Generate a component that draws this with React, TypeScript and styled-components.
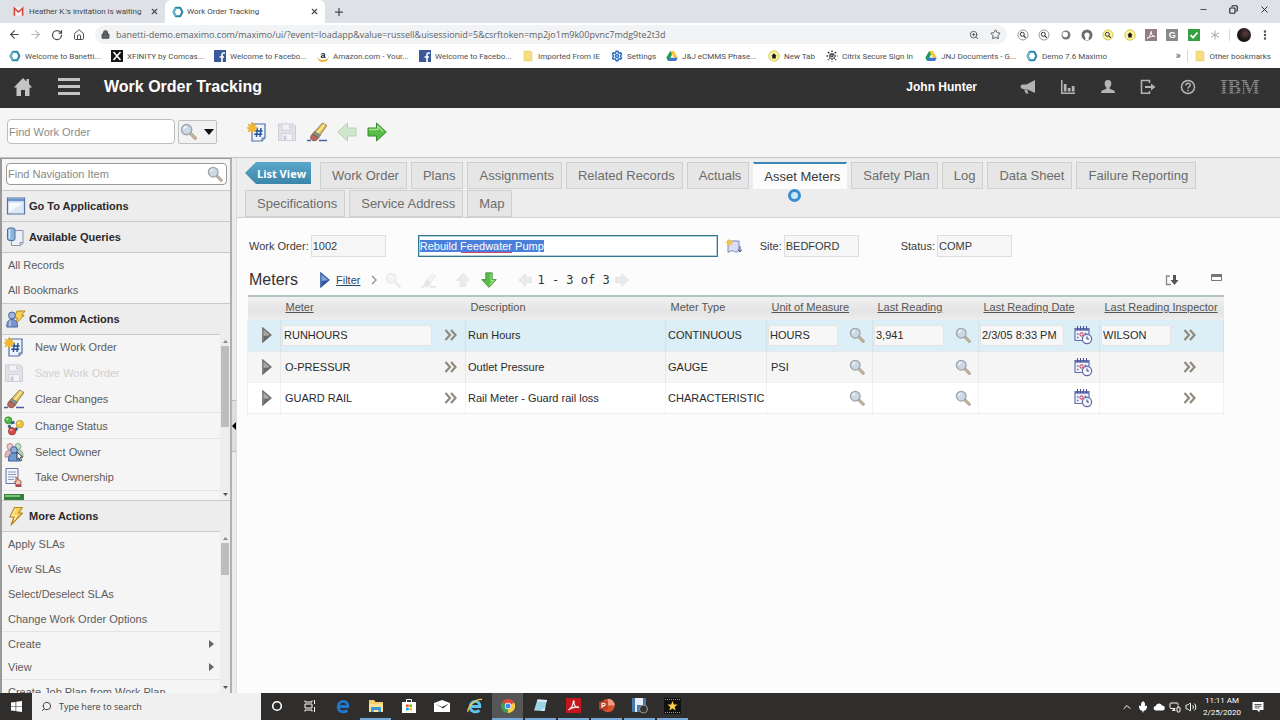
import React, { useEffect, useRef } from 'react';
import styled, { createGlobalStyle, css } from 'styled-components';
import {
  ArrowLeft, ArrowRight, RotateCw, House, Lock, ZoomIn, Star, X, Plus, Minus,
  EllipsisVertical, Search, Mic, Volume2, ChevronUp, MonitorSmartphone, Copy, Settings,
} from 'lucide-react';

const uiFont = '"Open Sans", "Noto Sans", sans-serif';
const smallFont = 'Roboto, "Open Sans", sans-serif';
const appFont = '"Liberation Sans", Arial, sans-serif';

const GlobalStyle = createGlobalStyle`
  *, *::before, *::after { box-sizing: border-box; }
  body { margin: 0; font-family: ${appFont}; font-size: 11px; color: #3a3a3a; background: #fcfcfc; }
  button, input { font: inherit; color: inherit; margin: 0; }
  button { border: 0; padding: 0; background: none; cursor: pointer; }
  a { color: inherit; }
  svg { display: block; flex: none; }
`;

const Page = styled.div`
  display: flex;
  flex-direction: column;
  height: 100vh;
  overflow: hidden;
`;

/* ---------- Browser chrome ---------- */

const TabStrip = styled.div`
  display: flex;
  flex: none;
  height: 23px;
  background: #dee1e6;
  font-family: ${smallFont};
  font-size: 8px;
  color: #45484c;
`;

const BrowserTab = styled.div<{ $active?: boolean }>`
  display: flex;
  align-items: center;
  gap: ${p => (p.$active ? 3 : 5)}px;
  width: ${p => (p.$active ? 160 : 165)}px;
  padding: 0 6px 0 ${p => (p.$active ? 7 : 13)}px;
  background: ${p => (p.$active ? '#fff' : 'transparent')};
  border-radius: 6px 6px 0 0;
`;

const TabTitle = styled.span`
  flex: 1;
  white-space: nowrap;
`;

const IconButton = styled.button<{ $w?: number }>`
  display: flex;
  flex: none;
  align-items: center;
  justify-content: center;
  width: ${p => (p.$w ? `${p.$w}px` : 'auto')};
`;

const WindowButtons = styled.div`
  display: flex;
  align-items: center;
  gap: 21px;
  height: 19px;
  margin-left: auto;
  padding-right: 10px;
  color: #222;
`;

const AddressRow = styled.div`
  display: flex;
  flex: none;
  align-items: center;
  height: 23px;
  padding: 0 9px 0 4px;
  background: #fff;
  color: #4a4d51;
`;

const NavButtons = styled.div`
  display: flex;
  width: 91px;
`;

const Omnibox = styled.label`
  display: flex;
  flex: 1;
  align-items: center;
  height: 19px;
  gap: 6px;
  padding: 0 4px 0 6px;
  border-radius: 10px;
  background: #f1f3f4;
`;

const AddressInput = styled.input`
  flex: 1;
  min-width: 0;
  border: 0;
  padding: 0;
  outline: 0;
  background: none;
  font-family: ${uiFont};
  font-size: 9px;
  color: #606367;
`;

const Extensions = styled.div`
  display: flex;
  justify-content: space-between;
  width: 208px;
  margin: 0 6px 0 8px;
`;

const ThinRule = styled.span`
  width: 1px;
  height: 12px;
  background: #d5d7da;
`;

const Avatar = styled.span`
  width: 14px;
  height: 14px;
  margin: 0 8px 0 7px;
  border-radius: 50%;
  background: radial-gradient(circle at 60% 40%, #5b4038, #151515 60%);
`;

const Bookmarks = styled.nav`
  display: flex;
  flex: none;
  align-items: center;
  height: 22px;
  padding: 0 9px 2px;
  background: #fff;
  font-family: ${smallFont};
  font-size: 8px;
  color: #4c4f53;
`;

const Bookmark = styled.a<{ $w?: number }>`
  display: flex;
  flex: none;
  align-items: center;
  gap: 4px;
  width: ${p => (p.$w ? `${p.$w}px` : 'auto')};
  white-space: nowrap;
  text-decoration: none;
`;

const BookmarkEnd = styled.div`
  display: flex;
  align-items: center;
  gap: 6px;
  margin-left: auto;
`;

const More = styled.button`
  font-size: 11px;
  line-height: 12px;
`;

/* ---------- Application header and toolbar ---------- */

const AppHeader = styled.header`
  display: flex;
  flex: none;
  align-items: center;
  height: 40px;
  padding: 0 20px 3px 12px;
  background: #323232;
  color: #fff;
`;

const AppTitle = styled.h1`
  flex: 1;
  margin: 0;
  font-size: 16px;
  font-weight: bold;
`;

const UserName = styled.span`
  margin-right: 31px;
  font-size: 12px;
  font-weight: bold;
`;

const Brand = styled.span`
  display: flex;
  align-items: flex-end;
  margin-left: 12px;
  font-family: "Liberation Serif", serif;
  font-size: 20px;
  line-height: 22px;
  font-weight: bold;
  color: transparent;
  background: repeating-linear-gradient(#8c8c8c 0 1px, #555 1px 2px);
  background-clip: text;
  -webkit-background-clip: text;
`;

const Toolbar = styled.div`
  display: flex;
  flex: none;
  align-items: center;
  height: 50px;
  padding: 0 7px 2px;
  background: #f5f5f5;
  border-bottom: 1px solid #c4c4c4;
`;

const FindInput = styled.input`
  width: 168px;
  height: 25px;
  padding: 0 1px;
  border: 1px solid #bdbdbd;
  border-radius: 4px;
  background: #fff;
  &::placeholder { color: #8c8c8c; }
`;

const FindButton = styled.button`
  display: flex;
  align-items: center;
  justify-content: space-between;
  width: 39px;
  height: 24px;
  margin: 0 25px 0 3px;
  padding: 0 2px 0 1px;
  border: 1px solid #c0c0c0;
  border-radius: 2px;
  background: #f2f2f2;
`;

/* ---------- Navigation sidebar ---------- */

const Body = styled.div`
  display: flex;
  flex: 1;
  min-height: 0;
`;

const Sidebar = styled.aside`
  display: flex;
  flex: none;
  flex-direction: column;
  width: 232px;
  border: solid #999;
  border-width: 1px 2px 0 2px;
  border-right-color: #b0b0b0;
  background: #f5f5f5;
  color: #5c5c5c;
`;

const NavSearch = styled.label`
  display: flex;
  flex: none;
  align-items: center;
  height: 22px;
  margin: 4px 3px 5px 4px;
  padding: 0 3px 0 1px;
  border: 1px solid #999;
  border-radius: 4px;
  background: #fff;
`;

const NavSearchInput = styled.input`
  flex: 1;
  min-width: 0;
  padding: 0;
  border: 0;
  outline: 0;
  background: none;
  &::placeholder { color: #888; }
`;

const SectionHead = styled.h2`
  display: flex;
  flex: none;
  align-items: center;
  gap: 3px;
  height: 32px;
  margin: 0;
  padding-left: 4px;
  border: solid #c9c9c9;
  border-width: 1px 0;
  margin-bottom: -1px;
  background: #ededed;
  font-size: 11px;
  font-weight: bold;
  color: #2a2a2a;
`;

const ScrollArea = styled.div<{ $h?: number }>`
  display: flex;
  flex: ${p => (p.$h ? 'none' : '1')};
  height: ${p => (p.$h ? `${p.$h}px` : 'auto')};
  min-height: 0;
`;

const NavList = styled.ul`
  flex: 1;
  margin: 0;
  padding: 0;
  list-style: none;
  overflow: hidden;
`;

const NavRow = styled.li<{ $h: number; $rule?: boolean }>`
  height: ${p => p.$h}px;
  border-top: ${p => (p.$rule ? '1px solid #e4e4e4' : '0')};
`;

const NavButton = styled.button<{ $icon?: boolean }>`
  display: flex;
  align-items: center;
  gap: ${p => (p.$icon ? 11 : 0)}px;
  width: 100%;
  height: 100%;
  padding: 0 6px 0 ${p => (p.$icon ? 2 : 6)}px;
  text-align: left;
  white-space: nowrap;
  &:disabled { color: #d0d0d0; }
`;

const NavLabel = styled.span`
  flex: 1;
`;

const ScrollTrack = styled.div`
  display: flex;
  flex-direction: column;
  align-items: center;
  width: 10px;
  padding: 6px 0 4px;
  background: #eee;
`;

const ScrollThumb = styled.div<{ $h: number }>`
  width: 8px;
  height: ${p => p.$h}px;
  margin: 3px 0 auto;
  background: #bdbdbd;
`;

const Splitter = styled.div`
  display: flex;
  flex: none;
  align-items: center;
  width: 5px;
  background: #ececec;
  border-right: 1px solid #ddd;
`;

const SplitHandle = styled.button`
  display: flex;
  align-items: center;
  width: 5px;
  height: 52px;
  border: solid #bbb;
  border-width: 1px 0;
  background: #dedede;
`;

/* ---------- Record area ---------- */

const Main = styled.main`
  flex: 1;
  min-width: 0;
  background: #fcfcfc;
`;

const RecordTabs = styled.div`
  display: flex;
  flex-wrap: wrap;
  gap: 1px 4px;
  padding: 4px 8px 0;
  border-bottom: 1px solid #d2d2d2;
  background: #ededed;
`;

const ListView = styled.button`
  display: flex;
  align-items: center;
  justify-content: center;
  width: 66px;
  height: 22px;
  margin-right: 5px;
  padding-left: 7px;
  background: linear-gradient(#5ba8cc, #3b84aa);
  clip-path: polygon(0 50%, 11px 0, 100% 0, 100% 100%, 11px 100%);
  font-family: ${uiFont};
  font-size: 11px;
  font-weight: bold;
  color: #fff;
`;

const Tab = styled.button<{ $active?: boolean }>`
  position: relative;
  height: 27px;
  padding: 0 7px 0 11px;
  border: 1px solid #cfcfcf;
  background: #e6e6e6;
  font-size: 13px;
  color: #6c6c6c;
  ${p => p.$active && css`
    padding: 0 6px 0 10px;
    border-color: #fcfcfc;
    border-top: 2px solid #3a86b4;
    background: #fcfcfc;
    color: #3a3a3a;
  `}
`;

const BusyRing = styled.span`
  position: absolute;
  top: 25px;
  left: 34px;
  width: 13px;
  height: 13px;
  border: 3px solid #3b8bd0;
  border-radius: 50%;
  background: #c9e9fb;
`;

const RecordFields = styled.div`
  display: flex;
  align-items: center;
  padding: 17px 12px 0;
`;

const Field = styled.label<{ $gap: number }>`
  display: flex;
  align-items: center;
  gap: 2px;
  margin-right: ${p => p.$gap}px;
  white-space: nowrap;
`;

const ReadonlyInput = styled.input<{ $w: number }>`
  width: ${p => p.$w}px;
  height: 22px;
  padding: 0 1px;
  border: 1px solid #dedede;
  background: #f6f6f6;
  outline: 0;
`;

const DescriptionBox = styled.div`
  position: relative;
  margin-right: 8px;
`;

const DescriptionInput = styled.input`
  display: block;
  width: 300px;
  height: 22px;
  padding: 0 1px;
  border: 1px solid #2f788f;
  box-shadow: inset 0 0 0 1px #b5d0d8;
  outline: 0;
  background: #fff;
  &::selection { background: #4a7fdb; color: #fff; }
`;

const SpellMark = styled.span`
  position: absolute;
  left: 43px;
  bottom: 4px;
  width: 51px;
  border-bottom: 1px solid #d04468;
`;

const Section = styled.section`
  padding: 9px 56px 0 10px;
`;

const SectionBar = styled.div`
  display: flex;
  align-items: center;
  height: 29px;
  padding: 0 1px 1px 2px;
`;

const SectionTitle = styled.h2`
  width: 71px;
  margin: 0;
  font-size: 16px;
  font-weight: normal;
  color: #333;
`;

const FilterLink = styled.a`
  margin: 0 11px 0 6px;
  color: #2c4a66;
`;

const BarGroup = styled.div<{ $gap: number; $ml?: number }>`
  display: flex;
  align-items: center;
  gap: ${p => p.$gap}px;
  margin-left: ${p => (p.$ml ? `${p.$ml}px` : 'auto')};
`;

const PageCount = styled.span`
  font-family: "DejaVu Sans Mono", monospace;
  font-size: 12px;
  color: #333;
`;

const MetersTable = styled.table`
  width: 100%;
  table-layout: fixed;
  border-collapse: collapse;
  border-top: 2px solid #b0c4c4;
`;

const Col = styled.col<{ $w?: number }>`
  width: ${p => (p.$w ? `${p.$w}px` : 'auto')};
`;

const HeadCell = styled.th`
  height: 24px;
  padding: 0 0 4px 5px;
  text-align: left;
  font-weight: normal;
  white-space: nowrap;
  color: #555;
`;

const HeadRow = styled.tr`
  background: linear-gradient(#f2f2f2, #e4e4e4 60%, #ededed);
`;

const Row = styled.tr<{ $tone: string }>`
  background: ${p => p.$tone};
`;

const Cell = styled.td<{ $tight?: boolean }>`
  height: 31px;
  padding: 0 0 0 ${p => (p.$tight ? 1 : 2)}px;
  border: 1px solid rgba(0, 0, 0, 0.05);
  border-top: 0;
  white-space: nowrap;
  color: #2a2a2a;
`;

const CellLine = styled.div`
  display: flex;
  align-items: center;
  gap: 11px;
`;

const CellInput = styled.input<{ $w: number }>`
  width: ${p => p.$w}px;
  height: 21px;
  padding: 0 1px;
  border: 1px solid #e4e4e4;
  background: #f7f7f7;
  outline: 0;
`;

const CellText = styled.span<{ $w: number }>`
  width: ${p => p.$w}px;
  padding-left: 3px;
`;

/* ---------- Taskbar ---------- */

const Taskbar = styled.footer`
  display: flex;
  flex: none;
  align-items: stretch;
  height: 27px;
  background: #302e2c;
  color: #fff;
  font-family: ${uiFont};
`;

const TaskSearch = styled.label`
  display: flex;
  align-items: center;
  gap: 7px;
  width: 229px;
  padding-left: 9px;
  background: #f0f0f0;
  color: #333;
`;

const TaskInput = styled.input`
  flex: 1;
  min-width: 0;
  padding: 0;
  border: 0;
  outline: 0;
  background: none;
  font-size: 9px;
  &::placeholder { color: #444; }
`;

const TaskButton = styled.button<{ $open?: boolean; $current?: boolean }>`
  display: flex;
  align-items: center;
  justify-content: center;
  width: 31px;
  margin-right: 2px;
  border-bottom: 2px solid ${p => (p.$open ? '#76a9d8' : 'transparent')};
  background: ${p => (p.$current ? '#565656' : 'transparent')};
`;

const Tray = styled.div`
  display: flex;
  align-items: center;
  gap: 4px;
  margin-left: auto;
  padding-right: 16px;
`;

const Clock = styled.time`
  margin: 0 7px 0 2px;
  font-family: ${smallFont};
  font-size: 8px;
  line-height: 12px;
  text-align: center;
`;

/* ---------- Icons ---------- */

const Glass = ({ size = 18, faded = false }: { size?: number; faded?: boolean }) => (
  <svg width={size} height={size} viewBox="0 0 18 18" opacity={faded ? 0.2 : 1}>
    <path d="M11 11l5 5" stroke="#a39682" strokeWidth="3.4" strokeLinecap="round" />
    <path d="M11 11l5 5" stroke="#c9b9a0" strokeWidth="1.6" strokeLinecap="round" />
    <circle cx="7" cy="7" r="5.4" fill="#cbd9e6" stroke="#a0a5ab" strokeWidth="1.5" />
    <path d="M4 6.5a3.2 3.2 0 0 1 3-2.6" stroke="#fff" strokeWidth="1.3" fill="none" />
  </svg>
);

const NewRecord = () => (
  <svg width="20" height="20" viewBox="0 0 20 20">
    <path d="M5 2h13v14l-3 3H5z" fill="#eef4fc" stroke="#4f6ea6" strokeWidth="1.2" />
    <path d="M15 19v-3h3" fill="#c0cfe8" stroke="#4f6ea6" strokeWidth="1" />
    <path d="M10.4 6l-1 9M14 6l-1 9M7.6 9h8M7.2 12.2h8" stroke="#234f96" strokeWidth="1.4" />
    <path d="M5 0l1.2 3.2L9 2 7.8 4.6 11 6 7.8 7 9 10 6.2 8.600 5 11.500 3.800 8.600 1 10 2.200 7 0 6l2.500-1.300L1 2l2.800 1.200z" fill="#f5b92e" stroke="#e09c1c" strokeWidth=".5" />
  </svg>
);

const Floppy = () => (
  <svg width="20" height="20" viewBox="0 0 20 20" opacity=".5">
    <path d="M1.500 2h15l2 2v14.500h-17z" fill="#cfd0e0" stroke="#a5a6bd" />
    <path d="M5 2h10v6H5z" fill="#f3f3f8" stroke="#a5a6bd" strokeWidth=".8" />
    <path d="M4.500 11.500h11v7h-11z" fill="#f3f3f8" stroke="#a5a6bd" strokeWidth=".8" />
    <path d="M6.500 13.500h3v5h-3z" fill="#a5a6bd" />
    <path d="M12 3h2v3.500h-2z" fill="#b5b6cb" />
  </svg>
);

const Eraser = ({ size = 20, faded = false }: { size?: number; faded?: boolean }) => (
  <svg width={size} height={size} viewBox="0 0 20 20" opacity={faded ? 0.2 : 1}>
    <path d="M0 18.500h4M12 18.500h8" stroke="#4f5f9e" strokeWidth="1.500" />
    <path d="M15.500 1L20 3.500 11.500 15 6 11.500z" fill={faded ? '#bbb' : '#e3c15c'} stroke={faded ? '#999' : '#7c6a34'} strokeWidth=".8" />
    <path d="M17.500 2.200L8.800 13.200" stroke="#fbe9a8" strokeWidth="1.500" />
    <path d="M7.500 9.500l6 3.800-2 2.600-6-3.700z" fill="#8b9484" stroke="#5e6459" strokeWidth=".6" />
    <path d="M5.500 12l6 3.900c-1.500 2.600-3.800 3.400-6 2.500s-2.800-3.800 0-6.400z" fill={faded ? '#999' : '#b9695c'} stroke={faded ? '#888' : '#7d453c'} strokeWidth=".7" />
  </svg>
);

const turns = { right: 0, down: 90, left: 180, up: 270 };
const BlockArrow = ({ dir, size = 20, tone = 'green' }: { dir: keyof typeof turns; size?: number; tone?: 'green' | 'pale' | 'grey' }) => {
  const fills = { green: ['#57bd45', '#3b8a35'], pale: ['#cfe6cf', '#b5d3b5'], grey: ['#ebebeb', '#e0e0e0'] }[tone];
  return (
    <svg width={size} height={size} viewBox="0 0 20 20">
      <g transform={`rotate(${turns[dir]} 10 10)`}>
        <path d="M1 6h8.500V1L19.300 10l-9.800 9v-5H1z" fill={fills[0]} stroke={fills[1]} />
        {tone === 'green' && <path d="M2 7.500h8.800V4.300L16 9.300" fill="none" stroke="#a5e196" strokeWidth="1.300" />}
      </g>
    </svg>
  );
};

const Triangle = ({ dir, w, h, color }: { dir: 'up' | 'down' | 'left' | 'right'; w: number; h: number; color: string }) => (
  <svg width={w} height={h} viewBox="0 0 10 10" preserveAspectRatio="none">
    <path fill={color} d={{ up: 'M0 10L5 0l5 10z', down: 'M0 0h10L5 10z', left: 'M10 0v10L0 5z', right: 'M0 0l10 5L0 10z' }[dir]} />
  </svg>
);

const RowArrow = ({ from = '#a8a8a8', to = '#6a6a6a' }: { from?: string; to?: string }) => (
  <svg width="10" height="16" viewBox="0 0 10 16">
    <path d="M.8 1L9 8 .8 15z" fill={from} stroke={to} strokeWidth="1.200" />
    <path d="M8.500 8.300L1.500 14V9z" fill={to} />
  </svg>
);

const Chevrons = () => (
  <svg width="16" height="14" viewBox="0 0 16 14" fill="none" stroke="#8f8a7c" strokeWidth="2.200">
    <path d="M2.500 2l4.500 5-4.500 5M8 2l4.500 5L8 12" />
  </svg>
);

const CalendarClock = () => (
  <svg width="20" height="20" viewBox="0 0 20 20">
    <path d="M2 3.500h14v12H2z" fill="#eef0fb" stroke="#6673b0" strokeWidth="1.200" />
    <path d="M2 4.500h14" stroke="#6673b0" strokeWidth="2.400" />
    <path d="M4.500 1v4M7.500 1v4M10.500 1v4M13.500 1v4" stroke="#444f94" strokeWidth="1" />
    <path d="M4 9h1.500M4 12.500h1.500M11.500 8.500h2" stroke="#6673b0" strokeWidth="1.600" />
    <circle cx="8.500" cy="9.500" r="1.600" fill="#fff" stroke="#d0506a" strokeWidth="1.100" />
    <circle cx="14" cy="14" r="4.600" fill="#f4f6fc" stroke="#62699c" strokeWidth="1.200" />
    <path d="M14 11.500V14h2" stroke="#333a70" fill="none" />
  </svg>
);

const LongDescription = () => (
  <svg width="17" height="17" viewBox="0 0 17 17">
    <path d="M3 3h11v9.500c-1.500 2-3 2-4.500 1s-4-1-6.500 1z" fill="#d9def4" stroke="#7f86b8" />
    <path d="M15 8v6M12.800 11.500L15 14l2-2.500" stroke="#4a5590" fill="none" />
    <path d="M4 0l1 2.500L7.500 2 6.500 4 8.500 5.500 6 6l-.5 2.500L4 6.500 2 8.200l.2-2.700L0 4.500 2.200 3.600 1.800 1.200 3.400 2.300z" fill="#f3c649" />
  </svg>
);

const AppWindow = () => (
  <svg width="20" height="20" viewBox="0 0 20 20">
    <path d="M1.500 2h17v16h-17z" fill="#dfe8f5" stroke="#5373a8" strokeWidth="1.200" />
    <path d="M2 2.600h16v2.600H2z" fill="#6f97cf" />
    <path d="M3 7h14l-14 9z" fill="#f7faff" />
  </svg>
);

const Queries = () => (
  <svg width="20" height="20" viewBox="0 0 20 20">
    <path d="M8 3.500h9v13l-3 2H5.500V12" fill="#eceff6" stroke="#8b94ab" />
    <path d="M14 18.500v-3h3" fill="#cfd6e5" stroke="#8b94ab" />
    <rect x="1.500" y="1" width="7.500" height="12.500" rx="2" fill="#8fb3dd" stroke="#4a6c9c" />
    <path d="M3.500 2.500v9" stroke="#d9e8f8" strokeWidth="1.500" />
  </svg>
);

const Bolt = () => (
  <svg width="20" height="20" viewBox="0 0 20 20">
    <path d="M8.500 1.500h8l-4 5.500h4L5 19l3-8H3.800z" fill="#f8d159" stroke="#b88520" strokeWidth="1.100" strokeLinejoin="round" />
    <path d="M9.500 3L6 9.500h4.500L8.500 14" fill="none" stroke="#fff2bd" strokeWidth="1.100" />
  </svg>
);

const PersonBolt = () => (
  <svg width="20" height="20" viewBox="0 0 20 20">
    <path d="M11 2h8l-3.500 4.500H18L9.500 15l2-6H8z" fill="#f8d159" stroke="#b88520" />
    <circle cx="6" cy="6.500" r="3.500" fill="#9fb5dd" stroke="#46659f" />
    <path d="M.8 18c0-5.500 1.500-7.500 5.200-7.500s5.500 2 5.500 7.500z" fill="#7895cc" stroke="#46659f" />
    <path d="M4 11.500v6" stroke="#bccdec" strokeWidth="1.500" />
  </svg>
);

const StatusDots = () => (
  <svg width="20" height="20" viewBox="0 0 21 20">
    <path d="M7 7l4-1M14 12l-3 3M5 9l2 4" stroke="#3b5792" strokeWidth="3" />
    <circle cx="4.500" cy="4" r="3.700" fill="#4db845" stroke="#2e7c2c" strokeWidth=".7" />
    <circle cx="16.500" cy="8" r="3.900" fill="#f0c43c" stroke="#b08a22" strokeWidth=".7" />
    <circle cx="8.500" cy="15.500" r="3.900" fill="#d24c48" stroke="#96302c" strokeWidth=".7" />
    <circle cx="3.500" cy="3" r="1.200" fill="#b4eda6" /><circle cx="15.300" cy="6.800" r="1.200" fill="#fdf0ae" /><circle cx="7.500" cy="14.300" r="1.200" fill="#f6aca6" />
  </svg>
);

const People = () => (
  <svg width="20" height="20" viewBox="0 0 20 20">
    <circle cx="6" cy="4.500" r="3" fill="#ecc5cb" stroke="#b58a94" /><path d="M1 15c0-5 2-7 5-7s4 2 4 7z" fill="#e2b6be" stroke="#b58a94" />
    <circle cx="14" cy="4.500" r="3" fill="#c3dfc8" stroke="#84a88c" /><path d="M11 15c0-5 1-7 4-7s4 2 4 7z" fill="#b5d5bc" stroke="#84a88c" />
    <circle cx="10" cy="8" r="3.300" fill="#8db0dd" stroke="#3d639c" /><path d="M4.500 19c0-6 2-8 5.500-8s5.500 2 5.500 8z" fill="#6f9ad2" stroke="#3d639c" />
    <path d="M13 10l5.500 5-2.300.3 1.500 3-1.500.7-1.500-3-1.700 1.500z" fill="#fff" stroke="#222" strokeWidth=".9" />
  </svg>
);

const TakeOwner = () => (
  <svg width="20" height="20" viewBox="0 0 20 20">
    <path d="M2 1.500h12v15H2z" fill="#f3f5fb" stroke="#6474a2" />
    <path d="M4 5h8M4 7.500h8M4 10h8M4 12.500h6" stroke="#8c9ac2" />
    <path d="M12 10.500c1.500-1 1.500 2 2 2.500 2 0 3.500.5 3 3L16.500 18H12l-1.500-3.500 1.500.5z" fill="#f0c8b0" stroke="#9c5a4c" />
    <path d="M11.500 17.500h6V20h-6z" fill="#ad4a4a" />
  </svg>
);

const GreenSheet = () => (
  <svg width="20" height="20" viewBox="0 0 20 20">
    <path d="M0 0h20v20H0z" fill="#35803c" /><path d="M1 1h15v2H1z" fill="#7cc47a" />
  </svg>
);

const MaximoRing = () => (
  <svg width="12" height="12" viewBox="0 0 12 12">
    <path d="M3.800 1.800h4.400L10.400 6 8.200 10.200H3.800L1.600 6z" fill="none" stroke="#2b87a8" strokeWidth="2" strokeLinejoin="round" />
    <path d="M3.800 1.800L1.600 6l2.200 4.200" fill="none" stroke="#66b6c9" strokeWidth="2" />
  </svg>
);

const GmailMark = () => (
  <svg width="11" height="11" viewBox="0 0 12 12"><path d="M1 1.500h10v9H1z" fill="#f7f1f0" /><path d="M1.500 10.500v-8L6 6.500l4.500-4v8" fill="none" stroke="#d0443a" strokeWidth="1.700" /></svg>
);

const FacebookMark = () => (
  <svg width="12" height="12" viewBox="0 0 12 12"><path d="M0 0h12v12H0z" fill="#3b5998" /><path d="M8 12V7h2M5.500 7H8M8 7V4.500q0-1.500 1.500-1.500H11" fill="none" stroke="#fff" strokeWidth="1.600" /></svg>
);

const XfinityMark = () => (
  <svg width="12" height="12" viewBox="0 0 12 12"><path d="M0 0h12v12H0z" fill="#151515" /><path d="M2.500 2l7 8M9.500 2l-7 8" stroke="#fff" strokeWidth="1.500" /></svg>
);

const LetterMark = styled.span<{ $bg?: string; $fg?: string }>`
  display: inline-flex;
  flex: none;
  align-items: center;
  justify-content: center;
  width: 12px;
  height: 12px;
  font-family: ${appFont};
  font-size: 9px;
  font-weight: bold;
  line-height: 12px;
  color: ${p => p.$fg ?? '#fff'};
  background: ${p => p.$bg ?? 'transparent'};
`;

const AmazonMark = styled(LetterMark)`
  line-height: 9px;
  border-bottom: 2px solid #f0a832;
  border-radius: 0 0 6px 6px;
`;

const FolderMark = () => (
  <svg width="12" height="12" viewBox="0 0 12 12"><path d="M2 1h6l2 1v9H2z" fill="#f6dc84" stroke="#e8c960" strokeWidth=".6" /></svg>
);

const DriveMark = () => (
  <svg width="12" height="12" viewBox="0 0 12 12">
    <path d="M4.200 1h3.600L4 8.500 2 11 .3 7.800z" fill="#1d9b58" /><path d="M4.200 1h3.600l4 6.800H8z" fill="#fbc62f" /><path d="M4 7.800h7.800L10 11H2z" fill="#3f74d0" />
  </svg>
);

const NewTabMark = () => (
  <svg width="12" height="12" viewBox="0 0 12 12"><circle cx="6" cy="6" r="5.200" fill="#fbf3a8" stroke="#d9c93c" /><path d="M6 3.300L3.400 6h.8v2.500h3.600V6h.8z" fill="#1c1c1c" /></svg>
);

const CitrixMark = () => (
  <svg width="12" height="12" viewBox="0 0 12 12" stroke="#333" strokeWidth="1.500" strokeDasharray="1.600 1"><path d="M6 .5v11M.5 6h11M2 2l8 8M10 2l-8 8" /></svg>
);

const Snowflake = () => (
  <svg width="12" height="12" viewBox="0 0 12 12" stroke="#aaa" strokeWidth="1"><path d="M6 1.500v9M2 3.800l8 4.400M10 3.800L2 8.200" /></svg>
);

const SmallSearch = ({ yellow = false }: { yellow?: boolean }) => (
  <svg width="12" height="12" viewBox="0 0 12 12" fill="none">
    <circle cx="6" cy="6" r="5" stroke={yellow ? '#dcc846' : '#999'} fill={yellow ? '#fbf3a8' : '#fff'} />
    <circle cx="5.300" cy="5.300" r="2" stroke="#333" /><path d="M6.800 6.800l2 2" stroke="#333" strokeWidth="1.200" />
  </svg>
);

const Disc = () => (
  <svg width="12" height="12" viewBox="0 0 12 12"><circle cx="6" cy="6" r="4.500" fill="#777" /><circle cx="5.200" cy="5.500" r="2.800" fill="#fff" /></svg>
);

const Headset = () => (
  <svg width="12" height="12" viewBox="0 0 12 12"><circle cx="6" cy="6" r="5.500" fill="#6b6b6b" /><circle cx="6" cy="6" r="2.600" fill="#fff" /><path d="M4.300 7.500h3.400V11H4.300z" fill="#fff" /></svg>
);

const PdfMark = ({ size = 12, bg = '#927f83' }: { size?: number; bg?: string }) => (
  <svg width={size} height={size} viewBox="0 0 12 12"><path d="M0 0h12v12H0z" fill={bg} /><path d="M2 9.500c2-.7 3.800-3.700 3.800-6.500 0-1 .9-1 .6.400C6 5.500 8 8 10 7.500c.5-.8-5-.3-8 2z" fill="none" stroke="#fff" strokeWidth=".9" /></svg>
);

const CheckMark = () => (
  <svg width="12" height="12" viewBox="0 0 12 12"><path d="M0 0h12v12H0z" fill="#35a043" /><path d="M2.500 6l2.500 2.700L9.500 3.500" fill="none" stroke="#fff" strokeWidth="1.800" /></svg>
);

const HeaderHome = () => (
  <svg width="20" height="20" viewBox="0 0 20 20" fill="#c4c4c4"><path d="M10 1L.8 10.500H3.500V19H8v-6h4v6h4.500v-8.500h2.700L16 7V2h-2.500v2.500z" /></svg>
);

const HeaderMenu = () => (
  <svg width="22" height="20" viewBox="0 0 22 20" fill="#c4c4c4"><path d="M0 1h22v3H0zM0 8h22v3H0zM0 15h22v3H0z" /></svg>
);

const Megaphone = () => (
  <svg width="16" height="16" viewBox="0 0 16 16" fill="#b4b4b4"><path d="M15 1v13L6.500 10H3Q.5 9.500.5 7.500T3 5.500h3.500zM4 10.500h3l1.500 4H6z" /></svg>
);

const Chart = () => (
  <svg width="16" height="16" viewBox="0 0 16 16" fill="#b4b4b4"><path d="M1 1h1.500v12.500H15V15H1zM3.800 5h2.700v7.500H3.800zM7.800 9h2.700v3.500H7.800zM11.800 7h2.700v5.500h-2.700z" /></svg>
);

const Person = () => (
  <svg width="16" height="16" viewBox="0 0 16 16" fill="#b4b4b4"><path d="M8 1c2.600 0 3.600 1.800 3.300 4.200C11 7 10.200 8 9.700 8.600v1.200l4.300 1.600q1 .6 1 2.600H1q0-2 1-2.600l4.300-1.600V8.600C5.800 8 5 7 4.700 5.200 4.400 2.800 5.400 1 8 1z" /></svg>
);

const SignOut = () => (
  <svg width="16" height="16" viewBox="0 0 16 16"><path d="M9.500 4V1.500h-8v12.800h8V12" fill="none" stroke="#b4b4b4" strokeWidth="1.500" /><path d="M5 7h6V4.500L15.500 8 11 11.500V9H5z" fill="#b4b4b4" /></svg>
);

const Help = () => (
  <svg width="16" height="16" viewBox="0 0 16 16" fill="none" stroke="#b4b4b4"><circle cx="8" cy="8" r="6.500" strokeWidth="1.500" /><path d="M5.800 6.400C5.800 3.600 10.300 3.800 10.200 6.300 10.100 7.800 8 7.800 8 9.600M8 10.800v1.500" strokeWidth="1.500" /></svg>
);

const Download = () => (
  <svg width="14" height="12" viewBox="0 0 14 12"><path d="M5 2H1.500v8.500H6" fill="none" stroke="#888" strokeWidth="1.300" /><path d="M8 1h3v5h2.500l-4 5-4-5H8z" fill="#555" /></svg>
);

const Collapse = () => (
  <svg width="11" height="12" viewBox="0 0 11 12"><path d="M.5.500h10v6H.5z" fill="#fff" stroke="#777" /><path d="M0 0h11v3H0z" fill="#777" /></svg>
);

const WindowsMark = () => (
  <svg width="11" height="11" viewBox="0 0 12 12" fill="#fff"><path d="M0 1.700l5-.7v4.700H0zM5.700.9L12 0v5.700H5.700zM0 6.300h5V11l-5-.7zM5.700 6.300H12V12l-6.300-.9z" /></svg>
);

const TaskView = () => (
  <svg width="12" height="12" viewBox="0 0 12 12" fill="none" stroke="#fff"><path d="M1 .5v1.500h7V.5M1 11.500V10h7v1.500M1 4h7v4H1zM10.500 0v4M10.500 7v5" /></svg>
);

const EdgeMark = ({ halo = false }: { halo?: boolean }) => (
  <svg width="16" height="16" viewBox="0 0 16 16" fill="none">
    <path d="M3.500 8.500h9.300C13 1.500 3.500 1.800 3.200 8.500c-.2 6 6 6.200 9.300 4" stroke={halo ? '#5ec3ee' : '#1f78cf'} strokeWidth="2.800" />
    {halo && <path d="M1 14C0 9 9 .5 15 1.500" stroke="#f2c94b" strokeWidth="1.300" />}
  </svg>
);

const Explorer = () => (
  <svg width="16" height="14" viewBox="0 0 16 14"><path d="M1 1h5l1.500 2H15v10H1z" fill="#f7d06c" /><path d="M1 5h14v8H1z" fill="#fbe296" /><path d="M3 8h10v5h-2.500v-2h-5v2H3z" fill="#3c96d8" /></svg>
);

const Store = () => (
  <svg width="16" height="16" viewBox="0 0 16 16"><path d="M5.500 4V1.500h5V4" fill="none" stroke="#fff" /><path d="M1 4h14v11H1z" fill="#fff" /><path d="M5 6.500h2.700V9H5z" fill="#f25022" /><path d="M8.300 6.500H11V9H8.300z" fill="#7fba00" /><path d="M5 9.700h2.700v2.600H5z" fill="#00a4ef" /><path d="M8.300 9.700H11v2.600H8.300z" fill="#ffb900" /></svg>
);

const Mail = () => (
  <svg width="16" height="14" viewBox="0 0 16 14"><path d="M0 4l8-3 8 3v9H0z" fill="#fff" /><path d="M1 4.500l7 3.500 7-3.500-6 5z" fill="#302e2c" /></svg>
);

const ChromeMark = () => (
  <svg width="14" height="14" viewBox="0 0 14 14"><path d="M7 7L.9 3.500a7 7 0 0 1 12.200 0z" fill="#e04a3a" /><path d="M7 7h0l6.100-3.500A7 7 0 0 1 7 14z" fill="#f8cd3c" /><path d="M7 7v7A7 7 0 0 1 .9 3.500z" fill="#3a9f54" /><circle cx="7" cy="7" r="3.200" fill="#fff" /><circle cx="7" cy="7" r="2.500" fill="#4586ee" /></svg>
);

const Notes = () => (
  <svg width="15" height="15" viewBox="0 0 15 15"><path d="M4.500 1.500L14 2l-2.500 11L1 12.500z" fill="#9fd3e6" /><path d="M4.500 1.500L14 2l-.4 2L4 3.200z" fill="#e3eef2" /><path d="M12.500 9l-1 4-4-.3z" fill="#d6eef6" /></svg>
);

const PowerPoint = () => (
  <svg width="16" height="15" viewBox="0 0 16 15"><circle cx="9" cy="7.500" r="6.800" fill="#d35230" /><path d="M9 .7a6.800 6.800 0 0 1 6.800 6.800H9z" fill="#f39b7c" /><path d="M0 3.500h8.500v8H0z" fill="#b83b1d" /><path d="M3 10V5.200h1.800a1.300 1.300 0 0 1 0 2.700H3" fill="none" stroke="#fff" strokeWidth="1.100" /></svg>
);

const Recorder = () => (
  <svg width="17" height="17" viewBox="0 0 17 17"><path d="M1 1h14v14H1z" fill="#e6edf6" /><path d="M1 1h3v14H1zM12 1h3v14h-3zM6 8h4v7H6z" fill="#4a76ae" /><circle cx="12.500" cy="12" r="4" fill="#333" stroke="#999" /></svg>
);

const MovieStar = () => (
  <svg width="17" height="16" viewBox="0 0 17 16"><path d="M0 0h17v16H0z" fill="#111" /><path d="M1 1.500h16M1 14.500h16" stroke="#999" strokeDasharray="1 1" /><path d="M8.500 3l1.400 3.400 3.600.2-2.800 2.300 1 3.500-3.200-2-3.200 2 1-3.500L3.500 6.600l3.600-.2z" fill="#f6cf4e" /></svg>
);

const Cloud = () => (
  <svg width="12" height="9" viewBox="0 0 12 9" fill="#fff"><path d="M3 8.500a2.300 2.300 0 0 1-.3-4.600A3.400 3.400 0 0 1 9 3.500a2.500 2.500 0 0 1 .5 5z" /></svg>
);

const Notice = () => (
  <svg width="12" height="12" viewBox="0 0 12 12"><path d="M.5 1h11v8H7.500v2.500L5 9H.5z" fill="#fff" /><path d="M2.500 3.500h7M2.500 5.200h7M2.500 7h5" stroke="#302e2c" strokeWidth=".8" /></svg>
);

/* ---------- Data ---------- */

const bookmarks: [string, number, React.ReactNode][] = [
  ['Welcome to Banetti...', 102, <MaximoRing />],
  ['XFINITY by Comcas...', 103, <XfinityMark />],
  ['Welcome to Facebo...', 103, <FacebookMark />],
  ['Amazon.com - Your...', 102, <AmazonMark $fg="#111">a</AmazonMark>],
  ['Welcome to Facebo...', 103, <FacebookMark />],
  ['Imported From IE', 89, <FolderMark />],
  ['Settings', 55, <Settings size={12} color="#2f6fc4" strokeWidth={3} />],
  ['J&J eCMMS Phase...', 102, <DriveMark />],
  ['New Tab', 58, <NewTabMark />],
  ['Citrix Secure Sign In', 99, <CitrixMark />],
  ['JNJ Documents - G...', 101, <DriveMark />],
  ['Demo 7.6 Maximo', 90, <MaximoRing />],
];

const commonActions: { label: string; icon: React.ReactNode; rule?: boolean; off?: boolean }[] = [
  { label: 'New Work Order', icon: <NewRecord /> },
  { label: 'Save Work Order', icon: <Floppy />, off: true },
  { label: 'Clear Changes', icon: <Eraser /> },
  { label: 'Change Status', icon: <StatusDots />, rule: true },
  { label: 'Select Owner', icon: <People />, rule: true },
  { label: 'Take Ownership', icon: <TakeOwner /> },
  { label: '', icon: <GreenSheet />, rule: true },
];

const moreActions: { label: string; sub?: boolean; rule?: boolean }[] = [
  { label: 'Apply SLAs' },
  { label: 'View SLAs' },
  { label: 'Select/Deselect SLAs' },
  { label: 'Change Work Order Options' },
  { label: 'Create', sub: true, rule: true },
  { label: 'View', sub: true },
  { label: 'Create Job Plan from Work Plan', rule: true },
];

const tabs = [
  'Work Order', 'Plans', 'Assignments', 'Related Records', 'Actuals', 'Asset Meters', 'Safety Plan',
  'Log', 'Data Sheet', 'Failure Reporting', 'Specifications', 'Service Address', 'Map',
];

const meters = [
  { meter: 'RUNHOURS', text: 'Run Hours', type: 'CONTINUOUS', unit: 'HOURS', reading: '3,941', date: '2/3/05 8:33 PM', by: 'WILSON' },
  { meter: 'O-PRESSUR', text: 'Outlet Pressure', type: 'GAUGE', unit: 'PSI', reading: '', date: '', by: '' },
  { meter: 'GUARD RAIL', text: 'Rail Meter - Guard rail loss', type: 'CHARACTERISTIC', unit: '', reading: '', date: '', by: '' },
];

const tones = ['#dceff7', '#f5f5f5', '#fff'];

const LookupCell = ({ label, value, width, active, children }: { label: string; value: string; width: number; active: boolean; children: React.ReactNode }) => (
  <Cell $tight>
    <CellLine>
      {active ? <CellInput $w={width} aria-label={label} defaultValue={value} /> : <CellText $w={width}>{value}</CellText>}
      <IconButton $w={16} aria-label={`${label} lookup`}>{children}</IconButton>
    </CellLine>
  </Cell>
);

const Scrollbar = ({ thumb }: { thumb: number }) => (
  <ScrollTrack>
    <Triangle dir="up" w={5} h={3} color="#888" />
    <ScrollThumb $h={thumb} />
    <Triangle dir="down" w={5} h={3} color="#555" />
  </ScrollTrack>
);

export default function App() {
  const description = useRef<HTMLInputElement>(null);
  useEffect(() => {
    description.current?.focus();
    description.current?.select();
  }, []);

  return (
    <Page>
      <GlobalStyle />
      <TabStrip>
        <BrowserTab>
          <GmailMark />
          <TabTitle>Heather K.'s invitation is waiting</TabTitle>
          <IconButton aria-label="Close tab"><X size={9} strokeWidth={3} /></IconButton>
        </BrowserTab>
        <BrowserTab $active>
          <MaximoRing />
          <TabTitle>Work Order Tracking</TabTitle>
          <IconButton aria-label="Close tab"><X size={9} strokeWidth={3} /></IconButton>
        </BrowserTab>
        <IconButton $w={28} aria-label="New tab"><Plus size={12} strokeWidth={2.5} /></IconButton>
        <WindowButtons>
          <IconButton aria-label="Minimize"><Minus size={9} /></IconButton>
          <IconButton aria-label="Restore"><Copy size={9} strokeWidth={3} transform="scale(-1 1)" /></IconButton>
          <IconButton aria-label="Close"><X size={11} /></IconButton>
        </WindowButtons>
      </TabStrip>

      <AddressRow>
        <NavButtons>
          <IconButton $w={21} aria-label="Back"><ArrowLeft size={13} /></IconButton>
          <IconButton $w={21} aria-label="Forward"><ArrowRight size={13} color="#b5b7ba" /></IconButton>
          <IconButton $w={22} aria-label="Reload"><RotateCw size={12} strokeWidth={2.5} /></IconButton>
          <IconButton $w={21} aria-label="Home"><House size={12} /></IconButton>
        </NavButtons>
        <Omnibox>
          <Lock size={9} strokeWidth={3} fill="#5f6368" />
          <AddressInput aria-label="Address" defaultValue="banetti-demo.emaximo.com/maximo/ui/?event=loadapp&value=russell&uisessionid=5&csrftoken=mp2jo1m9k00pvnc7mdg9te2t3d" />
          <IconButton $w={15} aria-label="Zoom"><ZoomIn size={10} /></IconButton>
          <IconButton $w={16} aria-label="Bookmark this page"><Star size={11} /></IconButton>
        </Omnibox>
        <Extensions>
          {[<SmallSearch />, <SmallSearch />, <Disc />, <Headset />, <SmallSearch yellow />, <NewTabMark />, <PdfMark />,
            <LetterMark $bg="#8a8a8a">G</LetterMark>, <CheckMark />, <Snowflake />].map((icon, i) => (
            <IconButton key={i} $w={16} aria-label={`Extension ${i + 1}`}>{icon}</IconButton>
          ))}
        </Extensions>
        <ThinRule />
        <Avatar />
        <IconButton aria-label="Menu"><EllipsisVertical size={12} strokeWidth={3} /></IconButton>
      </AddressRow>

      <Bookmarks>
        {bookmarks.map(([label, width, icon], i) => (
          <Bookmark key={i} $w={width} href="#">{icon}{label}</Bookmark>
        ))}
        <BookmarkEnd>
          <More aria-label="More bookmarks">»</More>
          <ThinRule />
          <Bookmark href="#"><FolderMark />Other bookmarks</Bookmark>
        </BookmarkEnd>
      </Bookmarks>

      <AppHeader>
        <IconButton $w={22} aria-label="Start center"><HeaderHome /></IconButton>
        <IconButton $w={70} aria-label="Go to"><HeaderMenu /></IconButton>
        <AppTitle>Work Order Tracking</AppTitle>
        <UserName>John Hunter</UserName>
        <IconButton $w={40} aria-label="Bulletins"><Megaphone /></IconButton>
        <IconButton $w={40} aria-label="Reports"><Chart /></IconButton>
        <IconButton $w={40} aria-label="Profile"><Person /></IconButton>
        <IconButton $w={40} aria-label="Sign out"><SignOut /></IconButton>
        <IconButton $w={40} aria-label="Help"><Help /></IconButton>
        <Brand>IBM</Brand>
      </AppHeader>

      <Toolbar>
        <FindInput placeholder="Find Work Order" aria-label="Find Work Order" />
        <FindButton aria-label="Search options">
          <Glass size={17} />
          <Triangle dir="down" w={10} h={6} color="#111" />
        </FindButton>
        <IconButton $w={30} aria-label="New Work Order"><NewRecord /></IconButton>
        <IconButton $w={30} aria-label="Save Work Order" disabled><Floppy /></IconButton>
        <IconButton $w={30} aria-label="Clear Changes"><Eraser /></IconButton>
        <IconButton $w={30} aria-label="Previous Record" disabled><BlockArrow dir="left" tone="pale" /></IconButton>
        <IconButton $w={30} aria-label="Next Record"><BlockArrow dir="right" /></IconButton>
      </Toolbar>

      <Body>
        <Sidebar>
          <NavSearch>
            <NavSearchInput placeholder="Find Navigation Item" aria-label="Find Navigation Item" />
            <Glass size={16} />
          </NavSearch>
          <SectionHead><AppWindow />Go To Applications</SectionHead>
          <SectionHead><Queries />Available Queries</SectionHead>
          <ScrollArea $h={51}>
            <NavList>
              <NavRow $h={25}><NavButton>All Records</NavButton></NavRow>
              <NavRow $h={25}><NavButton>All Bookmarks</NavButton></NavRow>
            </NavList>
          </ScrollArea>
          <SectionHead><PersonBolt />Common Actions</SectionHead>
          <ScrollArea $h={166}>
            <NavList>
              {commonActions.map((a, i) => (
                <NavRow key={i} $h={26} $rule={a.rule}>
                  <NavButton $icon disabled={a.off} aria-label={a.label || 'Report'}>{a.icon}<NavLabel>{a.label}</NavLabel></NavButton>
                </NavRow>
              ))}
            </NavList>
            <Scrollbar thumb={81} />
          </ScrollArea>
          <SectionHead><Bolt />More Actions</SectionHead>
          <ScrollArea>
            <NavList>
              {moreActions.map(a => (
                <NavRow key={a.label} $h={a.sub ? 24 : 25} $rule={a.rule}>
                  <NavButton><NavLabel>{a.label}</NavLabel>{a.sub && <Triangle dir="right" w={5} h={8} color="#666" />}</NavButton>
                </NavRow>
              ))}
            </NavList>
            <Scrollbar thumb={32} />
          </ScrollArea>
        </Sidebar>
        <Splitter>
          <SplitHandle aria-label="Collapse navigation"><Triangle dir="left" w={4} h={8} color="#000" /></SplitHandle>
        </Splitter>

        <Main>
          <RecordTabs>
            <ListView>List View</ListView>
            {tabs.map(t => (
              <Tab key={t} $active={t === 'Asset Meters'}>{t}{t === 'Asset Meters' && <BusyRing />}</Tab>
            ))}
          </RecordTabs>

          <RecordFields>
            <Field $gap={32}>Work Order:<ReadonlyInput $w={75} readOnly value="1002" /></Field>
            <DescriptionBox>
              <DescriptionInput ref={description} aria-label="Description" spellCheck={false} defaultValue="Rebuild Feedwater Pump" />
              <SpellMark />
            </DescriptionBox>
            <IconButton $w={16} aria-label="Long description"><LongDescription /></IconButton>
            <BarGroup $gap={0} $ml={18}>
              <Field $gap={42}>Site:<ReadonlyInput $w={75} readOnly value="BEDFORD" /></Field>
              <Field $gap={0}>Status:<ReadonlyInput $w={75} readOnly value="COMP" /></Field>
            </BarGroup>
          </RecordFields>

          <Section>
            <SectionBar>
              <SectionTitle>Meters</SectionTitle>
              <RowArrow from="#7fa3dd" to="#31589c" />
              <FilterLink href="#">Filter</FilterLink>
              <svg width="6" height="10" viewBox="0 0 6 10"><path d="M1 1l4 4-4 4" fill="none" stroke="#999" strokeWidth="1.500" /></svg>
              <BarGroup $gap={20} $ml={8}>
                <Glass size={16} faded />
                <Eraser size={15} faded />
                <BlockArrow dir="up" size={14} tone="grey" />
              </BarGroup>
              <BarGroup $gap={5} $ml={11}>
                <BlockArrow dir="down" size={16} />
              </BarGroup>
              <BarGroup $gap={5} $ml={21}>
                <BlockArrow dir="left" size={14} tone="grey" />
                <PageCount>1 - 3 of 3</PageCount>
                <BlockArrow dir="right" size={14} tone="grey" />
              </BarGroup>
              <BarGroup $gap={30}>
                <IconButton aria-label="Download"><Download /></IconButton>
                <IconButton $w={14} aria-label="Collapse"><Collapse /></IconButton>
              </BarGroup>
            </SectionBar>

            <MetersTable>
              <colgroup>
                <Col $w={33} /><Col $w={185} /><Col /><Col $w={101} /><Col $w={106} /><Col $w={106} /><Col $w={121} /><Col $w={124} />
              </colgroup>
              <thead>
                <HeadRow>
                  <HeadCell aria-label="Details" />
                  <HeadCell><a href="#">Meter</a></HeadCell>
                  <HeadCell>Description</HeadCell>
                  <HeadCell>Meter Type</HeadCell>
                  <HeadCell><a href="#">Unit of Measure</a></HeadCell>
                  <HeadCell><a href="#">Last Reading</a></HeadCell>
                  <HeadCell><a href="#">Last Reading Date</a></HeadCell>
                  <HeadCell><a href="#">Last Reading Inspector</a></HeadCell>
                </HeadRow>
              </thead>
              <tbody>
                {meters.map((m, i) => (
                  <Row key={m.meter} $tone={tones[i]}>
                    <Cell><IconButton $w={34} aria-label="View details"><RowArrow /></IconButton></Cell>
                    <LookupCell label="Meter" value={m.meter} width={150} active={i === 0}><Chevrons /></LookupCell>
                    <Cell>{m.text}</Cell>
                    <Cell>{m.type}</Cell>
                    <LookupCell label="Unit of Measure" value={m.unit} width={70} active={i === 0}><Glass size={16} /></LookupCell>
                    <LookupCell label="Last Reading" value={m.reading} width={70} active={i === 0}><Glass size={16} /></LookupCell>
                    <LookupCell label="Last Reading Date" value={m.date} width={84} active={i === 0}><CalendarClock /></LookupCell>
                    <LookupCell label="Last Reading Inspector" value={m.by} width={70} active={i === 0}><Chevrons /></LookupCell>
                  </Row>
                ))}
              </tbody>
            </MetersTable>
          </Section>
        </Main>
      </Body>

      <Taskbar>
        <IconButton $w={32} aria-label="Start"><WindowsMark /></IconButton>
        <TaskSearch>
          <Search size={11} transform="scale(-1 1)" />
          <TaskInput placeholder="Type here to search" aria-label="Search" />
        </TaskSearch>
        <TaskButton aria-label="Cortana"><svg width="12" height="12" viewBox="0 0 12 12"><circle cx="6" cy="6" r="4.300" fill="none" stroke="#fff" strokeWidth="1.600" /></svg></TaskButton>
        <TaskButton aria-label="Task view"><TaskView /></TaskButton>
        <TaskButton aria-label="Edge"><EdgeMark /></TaskButton>
        <TaskButton $open aria-label="File Explorer"><Explorer /></TaskButton>
        <TaskButton aria-label="Store"><Store /></TaskButton>
        <TaskButton aria-label="Mail"><Mail /></TaskButton>
        <TaskButton aria-label="Internet Explorer"><EdgeMark halo /></TaskButton>
        <TaskButton $open $current aria-label="Chrome"><ChromeMark /></TaskButton>
        <TaskButton $open aria-label="Notepad"><Notes /></TaskButton>
        <TaskButton $open aria-label="Acrobat"><PdfMark size={15} bg="#c4161c" /></TaskButton>
        <TaskButton $open aria-label="PowerPoint"><PowerPoint /></TaskButton>
        <TaskButton $open aria-label="Recorder"><Recorder /></TaskButton>
        <TaskButton $open aria-label="Movie editor"><MovieStar /></TaskButton>
        <Tray>
          <ChevronUp size={12} />
          <Mic size={12} fill="#fff" />
          <Cloud />
          <MonitorSmartphone size={12} />
          <Volume2 size={12} />
          <Clock>11:11 AM<br />2/25/2020</Clock>
          <Notice />
        </Tray>
      </Taskbar>
    </Page>
  );
}
